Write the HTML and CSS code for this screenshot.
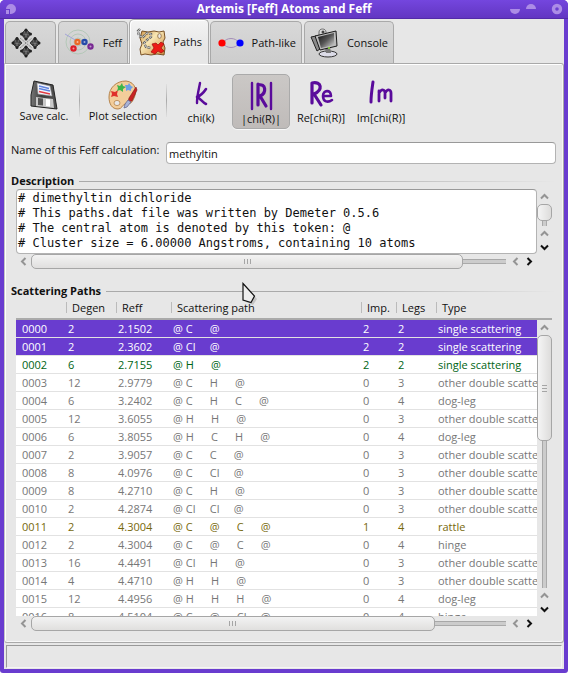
FILE: index.html
```
<!DOCTYPE html>
<html lang="en">
<head>
<meta charset="utf-8">
<title>Artemis [Feff] Atoms and Feff</title>
<link rel="stylesheet" href="styles.css">
</head>
<body>
<div class="window">
  <header class="titlebar">
    <button class="tb-btn" type="button" aria-label="Window menu"><svg width="12" height="12" viewBox="0 0 12 12"><path d="M6 1a5 5 0 1 1 0 10H5V6H1a5 5 0 0 1 5-5z" fill="#ac8ce6"/><path d="M1 7h3v4H1z" fill="#ac8ce6"/></svg></button>
    <h1 class="title">Artemis [Feff] Atoms and Feff</h1>
    <div class="tb-group">
      <button class="tb-btn" type="button" aria-label="Minimize"><svg width="12" height="12" viewBox="0 0 12 12"><path d="M1 6h10a5 5 0 0 1-10 0z" fill="#ac8ce6"/></svg></button>
      <button class="tb-btn" type="button" aria-label="Maximize"><svg width="12" height="12" viewBox="0 0 12 12"><path d="M1 6h10A5 5 0 0 0 1 6z" fill="#ac8ce6"/></svg></button>
      <button class="tb-btn tb-close" type="button" aria-label="Close"><svg width="12" height="12" viewBox="0 0 12 12"><circle cx="6" cy="6" r="3.5" fill="none" stroke="#ac8ce6" stroke-width="3.4"/></svg></button>
    </div>
  </header>

  <nav class="tabs" role="tablist">
    <button class="tab tab-atoms" type="button" role="tab" aria-label="Atoms">
      <svg width="30" height="30" viewBox="0 0 30 30">
        <g stroke="#888" stroke-width="1" stroke-dasharray="2 1"><path d="M9 10l12 10M9 20l12-10"/></g>
        <g fill="#3d3d3d" stroke="#181818" stroke-width=".7">
          <path d="M15 1l5 5-5 6-5-6z"/><path d="M15 18l5 5-5 6-5-6z"/><path d="M6 9.500l5 5.500-5 5-5-5z"/><path d="M24 9.500l5 5.500-5 5-5-5z"/>
        </g>
        <g fill="none" stroke="#858585" stroke-width=".6"><path d="M11 6l8 1M13 3l3 7M17 3l-3 7M11 23l8 1M13 20l3 7M17 20l-3 7M2 15l8 1M4 12l3 7M8 12l-3 7M20 15l8 1M22 12l3 7M26 12l-3 7"/></g>
        <g fill="#222"><circle cx="15" cy="2" r="1.500"/><circle cx="10.500" cy="6" r="1.500"/><circle cx="19.500" cy="6" r="1.500"/><circle cx="15" cy="11" r="1.500"/><circle cx="15" cy="19" r="1.500"/><circle cx="15" cy="28" r="1.500"/><circle cx="10.500" cy="23" r="1.500"/><circle cx="19.500" cy="23" r="1.500"/><circle cx="2" cy="15" r="1.500"/><circle cx="6" cy="10.500" r="1.500"/><circle cx="6" cy="19.500" r="1.500"/><circle cx="24" cy="10.500" r="1.500"/><circle cx="24" cy="19.500" r="1.500"/><circle cx="28" cy="15" r="1.500"/></g>
      </svg>
    </button>
    <button class="tab tab-feff" type="button" role="tab">
      <svg width="30" height="30" viewBox="0 0 30 30">
        <g fill="none" stroke="#b4c8b8" stroke-width="1"><circle cx="14" cy="14" r="4"/><circle cx="14" cy="14" r="8"/><circle cx="14" cy="14" r="12"/></g>
        <path d="M1 6l12 7" stroke="#a3a3d8" stroke-width="1"/>
        <circle cx="13.500" cy="14" r="3.200" fill="#ea6a27"/><circle cx="20.500" cy="14" r="3.200" fill="#254aa8"/><circle cx="9.500" cy="20.500" r="3.200" fill="#dc1f29"/><circle cx="26.500" cy="18.500" r="3.200" fill="#792a93"/>
        <g fill="#fff" opacity=".55"><circle cx="13.500" cy="14" r="1"/><circle cx="20.500" cy="14" r="1"/><circle cx="9.500" cy="20.500" r="1"/><circle cx="26.500" cy="18.500" r="1"/></g>
      </svg>
      <span>Feff</span>
    </button>
    <button class="tab tab-paths active" type="button" role="tab" aria-selected="true">
      <svg width="30" height="30" viewBox="0 0 30 30">
        <defs><linearGradient id="map" x1="0" y1="0" x2="1" y2="1"><stop offset="0" stop-color="#d39b4d"/><stop offset=".4" stop-color="#f8e6b4"/><stop offset="1" stop-color="#c98b3f"/></linearGradient></defs>
        <path d="M6 4l6 1 6-1 5 1 5-1 1 7-2 4 2 6-1 7-7-1-6 1-6-1-4 1-1-6 2-5-2-6z" fill="url(#map)" stroke="#7a5226" stroke-width="1"/>
        <ellipse cx="23.500" cy="9" rx="1.800" ry="2.400" fill="#ece9e4" stroke="#8d6a3e" stroke-width=".8"/>
        <path d="M4 2L2 4l1 5 4 1 4-4 4 1v3l-4 3-3 3 2 4 5 1" fill="none" stroke="#666" stroke-width="2.400" stroke-dasharray="3 1"/>
        <path d="M4 2L2 4l1 5 4 1 4-4 4 1v3l-4 3-3 3 2 4 5 1" fill="none" stroke="#ccc" stroke-width=".9" stroke-dasharray="3 1"/>
        <path d="M16 17l4-1 2 2 3-3 3 2-3 4 3 3-3 2-3-2-3 3-4-2 3-4z" fill="#ec1c16" stroke="#a10d0d" stroke-width=".7"/>
      </svg>
      <span>Paths</span>
    </button>
    <button class="tab tab-like" type="button" role="tab">
      <svg width="30" height="30" viewBox="0 0 30 30">
        <path d="M7 15c3-6 13-6 16 0-3 6-13 6-16 0z" fill="none" stroke="#a68fb8" stroke-width="1"/>
        <circle cx="6" cy="15" r="3.600" fill="#f00"/><circle cx="24" cy="15" r="3.600" fill="#00f"/>
      </svg>
      <span>Path-like</span>
    </button>
    <button class="tab tab-console" type="button" role="tab">
      <svg width="30" height="30" viewBox="0 0 30 30">
        <defs><linearGradient id="scr" x1="0" y1="0" x2="1" y2="1"><stop offset="0" stop-color="#111"/><stop offset=".5" stop-color="#555"/><stop offset="1" stop-color="#ddd"/></linearGradient></defs>
        <path d="M9 4c0-4 7-4 7 0v4H9z" fill="#d8d8d8" stroke="#555" stroke-width=".8"/><circle cx="13" cy="4" r="1.500" fill="#444"/>
        <path d="M1 9l5-1 4 13-3 2z" fill="#8b8b8b" stroke="#222" stroke-width="1"/>
        <ellipse cx="18" cy="26" rx="9" ry="3" fill="#dcdce8" stroke="#333" stroke-width="1"/><path d="M15 20l5-1 1 6h-5z" fill="#777"/>
        <path d="M5 8l21-5 1 15-17 4z" fill="#bbb" stroke="#1a1a1a" stroke-width="1"/><path d="M8 9l16-4v12l-13 3z" fill="url(#scr)"/><circle cx="19" cy="20" r="1" fill="#8fe03a"/>
      </svg>
      <span>Console</span>
    </button>
  </nav>

  <main class="panel">
    <div class="toolbar">
      <button class="tool tool-save" type="button">
        <svg width="30" height="30" viewBox="0 0 30 30">
          <defs><linearGradient id="disk" x1="0" y1="0" x2="1" y2="0"><stop offset="0" stop-color="#777"/><stop offset=".4" stop-color="#3d3d3d"/><stop offset="1" stop-color="#555"/></linearGradient></defs>
          <path d="M5 1l19 4 4 24-26-3V15z" fill="url(#disk)" stroke="#222" stroke-width="1"/>
          <path d="M8 3l13 3 2 10-14-2z" fill="#f4f6ff" stroke="#999" stroke-width=".6"/>
          <path d="M10 6l10 2.500M10 8.500l11 2.500" stroke="#5f82dc" stroke-width="1.500"/><path d="M10 11.500l11 2.500" stroke="#e33b43" stroke-width="1.500"/>
          <path d="M7 17l17 2 1 9-18-2z" fill="#c9c9c9"/><path d="M9 18l5 .6v7L9 25z" fill="#555"/><path d="M17 19l4 .5v7l-4-.5z" fill="#fff"/>
        </svg>
        <span>Save calc.</span>
      </button>
      <i class="sep"></i>
      <button class="tool tool-plot" type="button">
        <svg width="30" height="30" viewBox="0 0 30 30">
          <path d="M18 1C8 1 1 8 1 17c0 7 3 12 9 12 4 0 4-4 7-5s6 1 8-4C30 12 28 2 18 1z" fill="#f3cd9a" stroke="#b5834b" stroke-width="1"/>
          <ellipse cx="9" cy="23" rx="3" ry="2.600" fill="#e7e7e7" stroke="#b5834b" stroke-width=".8"/>
          <path d="M3 11l4 1 3-2-1 4 1 3-4-1-3 1 1-3z" fill="#e0302a"/><path d="M9 5l3 1 2-3 1 3 3 1-3 2v3l-3-2-3 1 1-3z" fill="#3db54a"/><path d="M17 5l3 0 1-2 2 3 2 1-2 2 0 2-3-1-2 1 0-3z" fill="#6d9fe6"/>
          <path d="M28 7l1 3-5 11-4 1 1-4z" fill="#c92323" stroke="#7d1515" stroke-width=".6"/><path d="M20 20l3 2-4 5-3 1 1-4z" fill="#a9b4d8" stroke="#5b5f86" stroke-width=".7"/>
        </svg>
        <span>Plot selection</span>
      </button>
      <i class="sep"></i>
      <div class="plot-kinds">
        <button class="tool" type="button">
          <svg class="ink" width="30" height="30" viewBox="0 0 30 30"><path d="M14 3c-1 6-3 12-3 20" stroke-width="2.400"/><path d="M20 9c-2 3-4 6-9 8 3 1 5 5 9 7" stroke-width="2.600"/></svg>
          <span>chi(k)</span>
        </button>
        <button class="tool pressed" type="button" aria-pressed="true">
          <svg class="ink" width="30" height="30" viewBox="0 0 30 30"><path d="M6 2v26M25 2v26" stroke-width="2.400"/><path d="M12 3v21M12 4c8-2 9 8 2 11l6 10" stroke-width="3.200"/></svg>
          <span>|chi(R)|</span>
        </button>
        <button class="tool" type="button">
          <svg class="ink" width="30" height="30" viewBox="0 0 30 30"><path d="M6 3v20M6 3c10-2 11 7 2 11l7 11" stroke-width="3.200"/><path d="M18 16h7c0-7-8-6-8 0 0 6 5 7 9 4" stroke-width="2.600"/></svg>
          <span>Re[chi(R)]</span>
        </button>
        <button class="tool" type="button">
          <svg class="ink" width="30" height="30" viewBox="0 0 30 30"><path d="M7 2c-1 7-2 13-2 20" stroke-width="3"/><path d="M13 11v10M13 13c3-5 6-3 6 0v5M19 13c3-5 6-3 6 0v8" stroke-width="2.800"/></svg>
          <span>Im[chi(R)]</span>
        </button>
      </div>
    </div>

    <div class="name-row">
      <label for="calc-name">Name of this Feff calculation:</label>
      <input id="calc-name" type="text" value="methyltin">
    </div>

    <section class="group">
      <h2><label for="desc">Description</label></h2>
      <div class="scroll-area">
        <textarea id="desc" rows="4" wrap="off" readonly># dimethyltin dichloride
# This paths.dat file was written by Demeter 0.5.6
# The central atom is denoted by this token: @
# Cluster size = 6.00000 Angstroms, containing 10 atoms</textarea>
        <div class="vbar">
          <button class="arrow dim" type="button" aria-label="Up"><svg width="9" height="7" viewBox="0 0 9 7"><path d="M1 5.500l3.500-3.500L8 5.500"/></svg></button>
          <div class="vtrack"><div class="thumb vthumb-small"></div></div>
          <button class="arrow dim" type="button" aria-label="Up"><svg width="9" height="7" viewBox="0 0 9 7"><path d="M1 5.500l3.500-3.500L8 5.500"/></svg></button>
          <button class="arrow" type="button" aria-label="Down"><svg width="9" height="7" viewBox="0 0 9 7"><path d="M1 1.500l3.500 3.500L8 1.500"/></svg></button>
        </div>
        <div class="hbar">
          <button class="arrow dim" type="button" aria-label="Left"><svg width="7" height="9" viewBox="0 0 7 9"><path d="M5.500 1L2 4.500 5.500 8"/></svg></button>
          <div class="htrack"><div class="thumb hthumb-desc"><i class="grip"></i></div></div>
          <button class="arrow dim" type="button" aria-label="Left"><svg width="7" height="9" viewBox="0 0 7 9"><path d="M5.500 1L2 4.500 5.500 8"/></svg></button>
          <button class="arrow" type="button" aria-label="Right"><svg width="7" height="9" viewBox="0 0 7 9"><path d="M1.500 1L5 4.500 1.500 8"/></svg></button>
        </div>
      </div>
    </section>

    <section class="group group-list">
      <h2>Scattering Paths</h2>
      <div class="scroll-area list-area">
        <div class="list">
          <table>
            <colgroup><col class="c-id"><col class="c-degen"><col class="c-reff"><col><col class="c-imp"><col class="c-legs"><col class="c-type"></colgroup>
            <thead><tr><th></th><th>Degen</th><th>Reff</th><th>Scattering path</th><th>Imp.</th><th>Legs</th><th>Type</th></tr></thead>
            <tbody>
              <tr class="selected"><td>0000</td><td>2</td><td>2.1502</td><td>@ C      @</td><td>2</td><td>2</td><td>single scattering</td></tr>
              <tr class="selected"><td>0001</td><td>2</td><td>2.3602</td><td>@ Cl     @</td><td>2</td><td>2</td><td>single scattering</td></tr>
              <tr class="strong"><td>0002</td><td>6</td><td>2.7155</td><td>@ H      @</td><td>2</td><td>2</td><td>single scattering</td></tr>
              <tr><td>0003</td><td>12</td><td>2.9779</td><td>@ C      H      @</td><td>0</td><td>3</td><td>other double scattering</td></tr>
              <tr><td>0004</td><td>6</td><td>3.2402</td><td>@ C      H      C      @</td><td>0</td><td>4</td><td>dog-leg</td></tr>
              <tr><td>0005</td><td>12</td><td>3.6055</td><td>@ H      H      @</td><td>0</td><td>3</td><td>other double scattering</td></tr>
              <tr><td>0006</td><td>6</td><td>3.8055</td><td>@ H      C      H      @</td><td>0</td><td>4</td><td>dog-leg</td></tr>
              <tr><td>0007</td><td>2</td><td>3.9057</td><td>@ C      C      @</td><td>0</td><td>3</td><td>other double scattering</td></tr>
              <tr><td>0008</td><td>8</td><td>4.0976</td><td>@ C      Cl     @</td><td>0</td><td>3</td><td>other double scattering</td></tr>
              <tr><td>0009</td><td>8</td><td>4.2710</td><td>@ C      H      @</td><td>0</td><td>3</td><td>other double scattering</td></tr>
              <tr><td>0010</td><td>2</td><td>4.2874</td><td>@ Cl     Cl     @</td><td>0</td><td>3</td><td>other double scattering</td></tr>
              <tr class="medium"><td>0011</td><td>2</td><td>4.3004</td><td>@ C      @      C      @</td><td>1</td><td>4</td><td>rattle</td></tr>
              <tr><td>0012</td><td>2</td><td>4.3004</td><td>@ C      @      C      @</td><td>0</td><td>4</td><td>hinge</td></tr>
              <tr><td>0013</td><td>16</td><td>4.4491</td><td>@ Cl     H      @</td><td>0</td><td>3</td><td>other double scattering</td></tr>
              <tr><td>0014</td><td>4</td><td>4.4710</td><td>@ H      H      @</td><td>0</td><td>3</td><td>other double scattering</td></tr>
              <tr><td>0015</td><td>12</td><td>4.4956</td><td>@ H      H      H      @</td><td>0</td><td>4</td><td>dog-leg</td></tr>
              <tr><td>0016</td><td>8</td><td>4.5104</td><td>@ C      @      Cl     @</td><td>0</td><td>4</td><td>hinge</td></tr>
            </tbody>
          </table>
        </div>
        <div class="vside">
          <div class="corner"></div>
          <div class="vbar">
            <button class="arrow dim" type="button" aria-label="Up"><svg width="9" height="7" viewBox="0 0 9 7"><path d="M1 5.500l3.500-3.500L8 5.500"/></svg></button>
            <div class="vtrack"><div class="thumb vthumb-list"><i class="grip"></i></div></div>
            <button class="arrow dim" type="button" aria-label="Up"><svg width="9" height="7" viewBox="0 0 9 7"><path d="M1 5.500l3.500-3.500L8 5.500"/></svg></button>
            <button class="arrow" type="button" aria-label="Down"><svg width="9" height="7" viewBox="0 0 9 7"><path d="M1 1.500l3.500 3.500L8 1.500"/></svg></button>
          </div>
        </div>
        <div class="hbar">
          <button class="arrow dim" type="button" aria-label="Left"><svg width="7" height="9" viewBox="0 0 7 9"><path d="M5.500 1L2 4.500 5.500 8"/></svg></button>
          <div class="htrack"><div class="thumb hthumb-list"><i class="grip"></i></div></div>
          <button class="arrow dim" type="button" aria-label="Left"><svg width="7" height="9" viewBox="0 0 7 9"><path d="M5.500 1L2 4.500 5.500 8"/></svg></button>
          <button class="arrow" type="button" aria-label="Right"><svg width="7" height="9" viewBox="0 0 7 9"><path d="M1.500 1L5 4.500 1.500 8"/></svg></button>
        </div>
      </div>
    </section>
  </main>

  <footer class="status"></footer>
  <svg class="pointer" width="16" height="24" viewBox="0 0 16 24"><path d="M3 3l12 14-4 6-7-3z" fill="#000" opacity=".15"/><path d="M1 1.500l11.500 12.500-3.500 6.500-8-2.500z" fill="#eee" stroke="#111" stroke-width="1.200"/></svg>
</div>
</body>
</html>
```
FILE: styles.css
```
* { box-sizing: border-box; }
html, body { height: 100%; margin: 0; background: #fff; }
body, button, input {
  font-family: "Open Sans", "Noto Sans", sans-serif;
  font-size: 11px;
  line-height: 16px;
  color: #111;
}
button { padding: 0; border: 0; background: none; }
svg { display: block; flex: none; }

.window {
  position: relative;
  display: flex;
  flex-direction: column;
  height: 100vh;
  min-height: 480px;
  padding: 0 4px 4px;
  background: #693ccf;
  border-radius: 5px 5px 3px 3px;
}
.window::before {
  content: "";
  position: absolute;
  inset: 19px 4px 4px;
  background: #e7e7e7;
}
.titlebar, .tabs, .panel, .status { position: relative; }

.titlebar {
  display: flex;
  align-items: center;
  height: 19px;
  flex: none;
  margin: 0 -4px;
  padding: 0 5px;
  background: linear-gradient(#7446de, #6236c2);
  border-bottom: 1px solid #532ba8;
  border-radius: 5px 5px 0 0;
}
.title {
  flex: 1;
  margin: 0 0 0 42px;
  text-align: center;
  font-size: 12px;
  line-height: 18px;
  color: #fff;
}
.tb-group { display: flex; gap: 4px; }
.tb-close { margin-left: 10px; }

.tabs {
  display: flex;
  align-items: flex-end;
  flex: none;
  height: 44px;
  padding-left: 1px;
  gap: 2px;
}
.tab {
  display: flex;
  align-items: center;
  justify-content: space-between;
  height: 42px;
  padding: 0 5px;
  border: 1px solid #a9a9a9;
  border-bottom: 0;
  border-radius: 5px 5px 0 0;
  background: linear-gradient(#d8d8d8, #cdcdcd);
}
.tab.active {
  position: relative;
  z-index: 1;
  height: 45px;
  margin: 0 -1px -1px;
  background: linear-gradient(#f4f4f4, #e7e7e7 60%);
  box-shadow: inset 1px 1px #fff;
}
.tab-atoms { width: 51px; }
.tab-feff { width: 70px; }
.tab-paths { width: 80px; padding: 0 6px; }
.tab-like { width: 92px; }
.tab-console { width: 90px; }

.panel {
  display: flex;
  flex-direction: column;
  flex: 1;
  min-height: 0;
  padding: 10px 7px 11px 6px;
  border: 1px solid #a9a9a9;
  border-left-color: #c4c4c4;
  border-radius: 0 3px 3px 3px;
  box-shadow: inset 1px 1px #fff, inset -1px -1px #f6f6f6;
}

.toolbar { display: flex; align-items: stretch; gap: 2px; height: 55px; flex: none; }
.plot-kinds { display: flex; gap: 2px; margin-left: 3px; }
.tool {
  display: flex;
  flex-direction: column;
  align-items: center;
  width: 58px;
  padding-top: 5px;
  border: 1px solid transparent;
  border-radius: 5px;
  white-space: nowrap;
}
.tool-save { width: 66px; }
.tool-plot { width: 82px; }
.tool-save span, .tool-plot span { margin-top: -2px; }
.tool.pressed {
  padding-top: 6px;
  background: linear-gradient(#cbc8c6, #bfbbb9);
  border-color: #aaa;
  box-shadow: 0 1px #f8f8f8;
}
.ink { fill: none; stroke: #5a0b9b; stroke-linecap: round; stroke-linejoin: round; }
.sep { width: 1px; margin: 10px 0 12px; background: linear-gradient(#e0e0e0, #aaa, #e0e0e0); }

.name-row { display: flex; align-items: flex-start; gap: 8px; margin-top: 13px; }
.name-row label { flex: none; width: 147px; white-space: nowrap; }
.name-row input {
  flex: 1;
  min-width: 0;
  height: 22px;
  padding: 0 2px;
  border: 1px solid #b3b3b3;
  border-top-color: #999;
  border-radius: 4px;
  background: #fff;
}

.group { margin-top: 9px; }
h2 {
  display: flex;
  align-items: center;
  gap: 5px;
  margin: 0;
  font-size: 11px;
  line-height: 16px;
}
h2::after {
  content: "";
  flex: 1;
  height: 1px;
  background: linear-gradient(90deg, #aaa 50%, #e7e7e7);
}
.scroll-area {
  display: grid;
  grid-template-columns: minmax(0, 1fr) 15px;
  margin: 0 4px 0 5px;
}
textarea {
  display: block;
  height: 65px;
  margin: 0;
  padding: 1px;
  resize: none;
  overflow: hidden;
  border: 1px solid #b3b3b3;
  border-top-color: #999;
  border-radius: 4px;
  background: #fff;
  color: #111;
  font: 12px/15px "DejaVu Sans Mono", monospace;
}

.arrow {
  display: grid;
  place-items: center;
  width: 15px;
  height: 15px;
  flex: none;
}
.arrow path { fill: none; stroke: #111; stroke-width: 2; }
.arrow.dim path { stroke: #949494; }
.hbar { display: flex; align-items: center; height: 15px; padding-right: 1px; }
.hbar .arrow + .arrow { width: 13px; }
.hbar .htrack + .arrow { margin-left: 2px; width: 15px; }
.vbar { display: flex; flex-direction: column; align-items: center; }
.vbar .arrow + .arrow { height: 13px; }
.htrack {
  display: flex;
  align-items: center;
  flex: 1;
  height: 15px;
  background: linear-gradient(transparent 5px, #a8a8a8 5px, #a8a8a8 6px, #ccc 6px, #ccc 9px, #aaa 9px, #aaa 10px, transparent 10px);
}
.vtrack {
  flex: 1;
  width: 15px;
  background: linear-gradient(90deg, transparent 5px, #a8a8a8 5px, #a8a8a8 6px, #ccc 6px, #ccc 9px, #aaa 9px, #aaa 10px, transparent 10px);
}
.thumb {
  display: grid;
  place-items: center;
  border: 1px solid #a6a6a6;
  border-radius: 5px;
  background: linear-gradient(#f3f3f3, #e0dfde);
}
.htrack .thumb { height: 15px; }
.vtrack .thumb { width: 15px; background: linear-gradient(90deg, #f5f5f5, #dddcdb); }
.hthumb-desc { width: 91%; }
.hthumb-list { width: 85%; }
.vthumb-small { height: 78%; }
.vthumb-list { height: 42%; }
.grip { width: 7px; height: 5px; background: repeating-linear-gradient(90deg, #a5a5a5 0 1px, transparent 1px 3px); }
.vtrack .grip { width: 5px; height: 7px; background: repeating-linear-gradient(#a5a5a5 0 1px, transparent 1px 3px); }

.group-list { display: flex; flex-direction: column; flex: 1; min-height: 0; margin-top: 14px; }
.list-area { flex: 1; min-height: 0; grid-template-rows: minmax(0, 1fr) 15px; }
.list { overflow: hidden; }
.vside { display: flex; flex-direction: column; min-height: 0; }
.vside .vbar { flex: 1; }
.corner { height: 21px; border-bottom: 2px solid #aaa; }
table { width: 100%; table-layout: fixed; border-collapse: separate; border-spacing: 0; }
.c-id, .c-degen { width: 50px; }
.c-reff { width: 55px; }
.c-imp { width: 35px; }
.c-legs { width: 40px; }
.c-type { width: 101px; }
th {
  height: 21px;
  padding: 0 0 2px 6px;
  text-align: left;
  font-weight: 400;
  line-height: 16px;
  border-bottom: 2px solid #aaa;
  background: linear-gradient(#bbb, #bbb) 0 3px / 1px 11px no-repeat;
}
th:first-child { background: none; }
td {
  height: 18px;
  padding: 0 0 0 2px;
  overflow: hidden;
  white-space: pre;
  line-height: 16px;
  color: #777;
  background: #fff;
  border-bottom: 1px solid #e2e2e2;
}
td:first-child { padding-left: 6px; }
.selected td { background: #693ccf; color: #fff; }
.strong td { color: #006414; }
.medium td { color: #77690c; }

.status {
  flex: none;
  height: 23px;
  margin: 2px 2px 1px;
  border: 1px solid #999;
  border-right-color: #f5f5f5;
  border-bottom-color: #f5f5f5;
}
.pointer { position: absolute; left: 242px; top: 282px; }
```
